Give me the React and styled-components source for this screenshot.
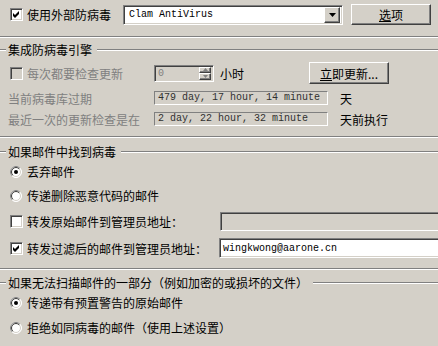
import React from 'react';
import styled, { createGlobalStyle, css } from 'styled-components';

const face = '#D4D0C8';
const shadow = '#808080';
const darkShadow = '#404040';

const GlobalStyle = createGlobalStyle`
  html, body {
    margin: 0;
    padding: 0;
    background: ${face};
  }
  body {
    font-family: "Noto Sans CJK SC", "Liberation Sans", sans-serif;
    font-size: 12px;
    color: #000;
  }
`;

const sunken = css`
  box-sizing: border-box;
  border-top: 1px solid ${shadow};
  border-left: 1px solid ${shadow};
  border-bottom: 1px solid #fff;
  border-right: 1px solid #fff;
  box-shadow: inset 1px 1px 0 ${darkShadow}, inset -1px -1px 0 ${face};
`;

const raised = css`
  box-sizing: border-box;
  border-top: 1px solid #fff;
  border-left: 1px solid #fff;
  border-bottom: 1px solid ${darkShadow};
  border-right: 1px solid ${darkShadow};
  box-shadow: inset -1px -1px 0 ${shadow};
  background: ${face};
`;

const Page = styled.div`
  width: 438px;
  height: 346px;
  overflow: hidden;
  background: ${face};
  display: flex;
  flex-direction: column;
`;

const TopRow = styled.div`
  display: flex;
  align-items: center;
  height: 21px;
  margin-top: 4px;
`;

const CheckItem = styled.label`
  display: flex;
  align-items: center;
  gap: 4px;
  width: ${({ $w }) => $w}px;
  padding-left: 10px;
  box-sizing: border-box;
  flex: none;
  line-height: 13px;
  white-space: nowrap;
  color: ${({ $disabled }) => ($disabled ? shadow : '#000')};
`;

const Box = styled.span`
  ${sunken};
  width: 13px;
  height: 13px;
  flex: none;
  display: flex;
  align-items: center;
  justify-content: center;
  background: ${({ $disabled }) => ($disabled ? face : '#fff')};
`;

const Combo = styled.div`
  ${sunken};
  width: 220px;
  height: 20px;
  background: #fff;
  display: flex;
  align-items: center;
  padding: 2px;
  margin-left: 4px;
  font-family: "Liberation Mono", monospace;
  font-size: 10px;
`;

const ComboText = styled.span`
  flex: 1;
  padding-left: 3px;
`;

const ComboButton = styled.span`
  ${raised};
  width: 16px;
  height: 16px;
  display: flex;
  align-items: center;
  justify-content: center;
`;

const Button = styled.div`
  ${raised};
  width: ${({ $w }) => $w}px;
  height: ${({ $h }) => $h}px;
  margin-left: ${({ $ml }) => $ml}px;
  display: flex;
  align-items: center;
  justify-content: center;
  line-height: 13px;
  flex: none;
  & u {
    text-decoration: underline;
    text-underline-offset: 1px;
  }
`;

const Etched = styled.div`
  height: 0;
  border-top: 1px solid ${shadow};
  border-bottom: 1px solid #fff;
  margin-top: ${({ $mt }) => $mt}px;
`;

const Header = styled.div`
  display: flex;
  align-items: center;
  height: 13px;
  margin-top: ${({ $mt }) => $mt}px;
  line-height: 13px;
  white-space: nowrap;
`;

const HeaderLine = styled.div`
  height: 0;
  border-top: 1px solid ${shadow};
  border-bottom: 1px solid #fff;
  ${({ $w }) => ($w ? `width: ${$w}px; flex: none;` : 'flex: 1;')}
`;

const HeaderTitle = styled.span`
  padding: 0 5px 0 2px;
`;

const Row = styled.div`
  display: flex;
  align-items: center;
  height: ${({ $h }) => $h}px;
  margin-top: ${({ $mt }) => $mt}px;
  line-height: 13px;
  white-space: nowrap;
`;

const Text = styled.span`
  color: ${({ $disabled }) => ($disabled ? shadow : '#000')};
  margin-left: ${({ $ml }) => $ml || 0}px;
  ${({ $w }) => $w && `width: ${$w}px; flex: none;`}
`;

const ReadField = styled.div`
  box-sizing: border-box;
  width: 174px;
  height: 14px;
  border-top: 1px solid ${shadow};
  border-left: 1px solid ${shadow};
  border-bottom: 1px solid #fff;
  border-right: 1px solid #fff;
  font-family: "Liberation Mono", monospace;
  font-size: 10px;
  line-height: 12px;
  padding-left: 3px;
  color: #303030;
  flex: none;
`;

const Spin = styled.div`
  ${sunken};
  width: 60px;
  height: 17px;
  display: flex;
  align-items: center;
  padding: 2px;
  flex: none;
  font-family: "Liberation Mono", monospace;
  font-size: 10px;
  color: ${shadow};
`;

const SpinValue = styled.span`
  flex: 1;
  padding-left: 1px;
`;

const SpinButtons = styled.div`
  display: flex;
  flex-direction: column;
  width: 12px;
  height: 13px;
`;

const SpinButton = styled.span`
  ${raised};
  flex: 1;
  display: flex;
  align-items: center;
  justify-content: center;
`;

const Input = styled.div`
  ${sunken};
  width: 230px;
  height: ${({ $h }) => $h}px;
  flex: none;
  background: ${({ $disabled }) => ($disabled ? face : '#fff')};
  font-family: "Liberation Mono", monospace;
  font-size: 10px;
  display: flex;
  align-items: center;
  padding-left: 3px;
`;

const RadioItem = styled.label`
  display: flex;
  align-items: center;
  gap: 5px;
  padding-left: 10px;
  line-height: 13px;
  white-space: nowrap;
`;

function Check({ checked, disabled }) {
  return (
    <Box $disabled={disabled}>
      {checked && (
        <svg width="9" height="9" viewBox="0 0 9 9">
          <polygon points="1,3 3,5 7,1 7,4 3,8 1,6" fill={disabled ? shadow : '#000'} />
        </svg>
      )}
    </Box>
  );
}

function Radio({ checked }) {
  return (
    <svg width="12" height="12" viewBox="0 0 12 12" style={{ flex: 'none' }}>
      <circle cx="6" cy="6" r="5.5" fill="#fff" stroke="#fff" />
      <path d="M2.1 9.9 A5.5 5.5 0 0 1 9.9 2.1" fill="none" stroke={shadow} />
      <circle cx="6" cy="6" r="4.5" fill="#fff" stroke={face} />
      <path d="M2.8 9.2 A4.5 4.5 0 0 1 9.2 2.8" fill="none" stroke={darkShadow} />
      {checked && <circle cx="6" cy="6" r="2" fill="#000" />}
    </svg>
  );
}

function Arrow({ up, size = 7, color = '#000' }) {
  const h = Math.ceil(size / 2);
  return (
    <svg width={size} height={h} viewBox={`0 0 ${size} ${h}`}>
      <polygon
        points={up ? `0,${h} ${size},${h} ${size / 2},0` : `0,0 ${size},0 ${size / 2},${h}`}
        fill={color}
      />
    </svg>
  );
}

function GroupHeader({ title, mt }) {
  return (
    <Header $mt={mt}>
      <HeaderLine $w={6} />
      <HeaderTitle>{title}</HeaderTitle>
      <HeaderLine />
    </Header>
  );
}

export default function App() {
  return (
    <Page>
      <GlobalStyle />
      <TopRow>
        <CheckItem $w={119}>
          <Check checked />
          使用外部防病毒
        </CheckItem>
        <Combo>
          <ComboText>Clam AntiVirus</ComboText>
          <ComboButton>
            <Arrow />
          </ComboButton>
        </Combo>
        <Button $w={80} $h={21} $ml={8}>
          <span>
            <u>选</u>项
          </span>
        </Button>
      </TopRow>
      <Etched $mt={11} />

      <GroupHeader title="集成防病毒引擎" mt={5} />
      <Row $h={22} $mt={6}>
        <CheckItem $w={154} $disabled>
          <Check disabled />
          每次都要检查更新
        </CheckItem>
        <Spin>
          <SpinValue>0</SpinValue>
          <SpinButtons>
            <SpinButton>
              <Arrow up size={5} color={shadow} />
            </SpinButton>
            <SpinButton>
              <Arrow size={5} color={shadow} />
            </SpinButton>
          </SpinButtons>
        </Spin>
        <Text $ml={6} $w={89}>小时</Text>
        <Button $w={80} $h={22} $ml={0}>
          <span>
            <u>立</u>即更新...
          </span>
        </Button>
      </Row>
      <Row $h={14} $mt={7}>
        <Text $disabled $ml={8} $w={146}>当前病毒库过期</Text>
        <ReadField>479 day, 17 hour, 14 minute</ReadField>
        <Text $ml={12}>天</Text>
      </Row>
      <Row $h={14} $mt={7}>
        <Text $disabled $ml={8} $w={146}>最近一次的更新检查是在</Text>
        <ReadField>2 day, 22 hour, 32 minute</ReadField>
        <Text $ml={12}>天前执行</Text>
      </Row>
      <Etched $mt={10} />

      <GroupHeader title="如果邮件中找到病毒" mt={7} />
      <Row $h={13} $mt={7}>
        <RadioItem>
          <Radio checked />
          丢弃邮件
        </RadioItem>
      </Row>
      <Row $h={13} $mt={11}>
        <RadioItem>
          <Radio />
          传递删除恶意代码的邮件
        </RadioItem>
      </Row>
      <Row $h={19} $mt={10}>
        <CheckItem $w={220}>
          <Check />
          转发原始邮件到管理员地址：
        </CheckItem>
        <Input $h={19} $disabled />
      </Row>
      <Row $h={20} $mt={7}>
        <CheckItem $w={219}>
          <Check checked />
          转发过滤后的邮件到管理员地址：
        </CheckItem>
        <Input $h={20}>wingkwong@aarone.cn</Input>
      </Row>
      <Etched $mt={10} />

      <GroupHeader title="如果无法扫描邮件的一部分（例如加密的或损坏的文件）" mt={6} />
      <Row $h={13} $mt={7}>
        <RadioItem>
          <Radio checked />
          传递带有预置警告的原始邮件
        </RadioItem>
      </Row>
      <Row $h={13} $mt={12}>
        <RadioItem>
          <Radio />
          拒绝如同病毒的邮件（使用上述设置）
        </RadioItem>
      </Row>
    </Page>
  );
}
